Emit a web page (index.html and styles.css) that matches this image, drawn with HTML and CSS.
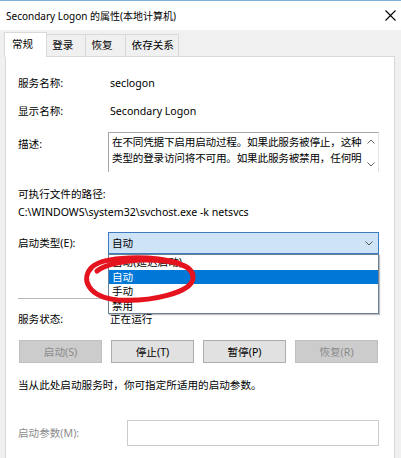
FILE: index.html
```html
<!DOCTYPE html>
<html lang="zh-CN">
<head>
<meta charset="utf-8">
<title>Secondary Logon 的属性(本地计算机)</title>
<link rel="stylesheet" href="styles.css">
</head>
<body>
<div class="win">
  <div class="titlebar">
    <span class="title">Secondary Logon 的属性(本地计算机)</span>
    <svg class="close" width="11" height="11" viewBox="0 0 11 11"><path d="M0.5 0.5 L10.5 10.5 M10.5 0.5 L0.5 10.5" stroke="#000" stroke-width="1.1" fill="none"/></svg>
  </div>
  <div class="tabs">
    <div class="tab active">常规</div>
    <div class="tab">登录</div>
    <div class="tab">恢复</div>
    <div class="tab last">依存关系</div>
  </div>
  <div class="panel">
    <div class="row r-name"><span class="lbl">服务名称:</span><span class="val">seclogon</span></div>
    <div class="row r-disp"><span class="lbl">显示名称:</span><span class="val">Secondary Logon</span></div>
    <div class="row r-desc">
      <span class="lbl desc-lbl">描述:</span>
      <div class="textbox">
        <div class="textbox-text">在不同凭据下启用启动过程。如果此服务被停止，这种<br>类型的登录访问将不可用。如果此服务被禁用，任何明</div>
        <div class="scroll">
          <svg width="8" height="5" viewBox="0 0 8 5"><path d="M0.5 4.5 L4 1 L7.5 4.5" stroke="#606060" stroke-width="1" fill="none"/></svg>
          <svg width="8" height="5" viewBox="0 0 8 5"><path d="M0.5 0.5 L4 4 L7.5 0.5" stroke="#606060" stroke-width="1" fill="none"/></svg>
        </div>
      </div>
    </div>
    <div class="exe-lbl">可执行文件的路径:</div>
    <div class="exe-path">C:\WINDOWS\system32\svchost.exe -k netsvcs</div>
    <div class="row r-type">
      <span class="lbl">启动类型(E):</span>
      <div class="combo">
        <div class="combo-box"><span>自动</span>
          <svg width="8" height="5" viewBox="0 0 8 5"><path d="M0.5 0.5 L4 4 L7.5 0.5" stroke="#555" stroke-width="1" fill="none"/></svg>
        </div>
        <ul class="dropdown">
          <li>自动(延迟启动)</li>
          <li class="sel">自动</li>
          <li>手动</li>
          <li>禁用</li>
        </ul>
      </div>
    </div>
    <div class="sep"></div>
    <div class="row r-status"><span class="lbl">服务状态:</span><span class="val">正在运行</span></div>
    <div class="btns">
      <button class="btn" disabled>启动(S)</button>
      <button class="btn">停止(T)</button>
      <button class="btn">暂停(P)</button>
      <button class="btn" disabled>恢复(R)</button>
    </div>
    <div class="hint">当从此处启动服务时，你可指定所适用的启动参数。</div>
    <div class="row r-param">
      <span class="lbl dis">启动参数(M):</span>
      <div class="param-input"></div>
    </div>
  </div>
  <svg class="mark" width="401" height="458" viewBox="0 0 401 458">
    <path d="M178 262 C150 254 104 255 92 266 C80 278 88 296 118 299 C150 301 192 292 193 277 C194 264 172 258 140 259 C122 260 104 264 97 270" stroke="#e5131d" stroke-width="5" fill="none" stroke-linecap="round"/>
  </svg>
</div>
</body>
</html>
```

FILE: styles.css
```css
* { box-sizing: border-box; }
body {
  margin: 0;
  font-family: "Segoe UI", "Noto Sans", "Noto Sans CJK SC", sans-serif;
  font-size: 10.6px;
  color: #000;
  background: #f0f0f0;
}
.win {
  width: 401px;
  height: 458px;
  overflow: hidden;
  background: #f0f0f0;
  position: relative;
  border-top: 1px solid #7eb0dc;
}
.titlebar {
  height: 29px;
  background: #fff;
  display: flex;
  align-items: center;
  justify-content: space-between;
  padding: 0 5px 0 6px;
}
.title { font-size: 10px; line-height: 16px; }
.tabs {
  display: flex;
  align-items: flex-end;
  height: 25px;
  margin-top: 2px;
  margin-bottom: -1px;
  padding-left: 4px;
  position: relative;
  z-index: 1;
}
.tab {
  height: 22px;
  margin-bottom: 1px;
  margin-left: -1px;
  border: 1px solid #d9d9d9;
  border-bottom: none;
  padding: 0 12px 0 5px;
  line-height: 20px;
  background: #f0f0f0;
}
.tab.active {
  height: 25px;
  margin-bottom: 0;
  margin-left: 0;
  background: #fff;
  padding: 0 13px 0 7px;
  line-height: 22px;
}
.tab.last { padding-right: 4px; padding-left: 6px; }
.panel {
  margin-left: 5px;
  width: 390px;
  height: 410px;
  background: #fff;
  border: 1px solid #d9d9d9;
  padding: 0 15px 0 12px;
}
.row {
  display: grid;
  grid-template-columns: 90px 1fr;
  align-items: center;
  line-height: 16px;
}
.val { padding-left: 2px; }
.r-name { margin-top: 18px; }
.r-disp { margin-top: 12px; }
.r-desc { margin-top: 13px; align-items: start; }
.desc-lbl { padding-top: 4px; }
.textbox {
  height: 40px;
  border-top: 1px solid #a8a8a8;
  border-left: 1px solid #a8a8a8;
  border-right: 1px solid #e3e3e3;
  display: flex;
  overflow: hidden;
}
.textbox-text {
  flex: 1;
  padding: 1px 0 0 3px;
  line-height: 16px;
  white-space: nowrap;
  overflow: hidden;
  letter-spacing: -0.2px;
}
.scroll {
  width: 14px;
  flex: none;
  display: flex;
  flex-direction: column;
  justify-content: space-between;
  align-items: center;
  padding: 6px 0 5px;
}
.exe-lbl { margin-top: 14px; line-height: 16px; }
.exe-path { margin-top: 2px; line-height: 16px; }
.r-type { margin-top: 12px; }
.combo { position: relative; }
.combo-box {
  height: 22px;
  border: 1px solid #3d7bbf;
  background: #cfe3f6;
  display: flex;
  align-items: center;
  justify-content: space-between;
  padding: 0 5px 0 3px;
}
.dropdown {
  position: absolute;
  top: 22px;
  left: 0;
  right: 0;
  margin: 0;
  padding: 0;
  list-style: none;
  background: #fff;
  border: 1px solid #6b7f95;
  box-shadow: 1px 1px 1px rgba(0,0,0,0.25);
  z-index: 2;
}
.dropdown li {
  height: 14.5px;
  line-height: 14.5px;
  padding-left: 3px;
}
.dropdown li.sel { background: #0078d7; color: #fff; }
.sep { margin-top: 44px; height: 1px; background: #b9b9b9; }
.r-status { margin-top: 12px; }
.btns {
  margin-top: 13px;
  margin-left: 1px;
  margin-right: 1px;
  display: grid;
  grid-template-columns: repeat(4, 1fr);
  column-gap: 9px;
}
.btn {
  height: 23px;
  font: inherit;
  color: #000;
  background: #e1e1e1;
  border: 1px solid #adadad;
  padding: 0;
}
.btn:disabled { background: #cccccc; border-color: #bfbfbf; color: #8a8a8a; }
.hint { margin-top: 14px; line-height: 16px; }
.r-param { margin-top: 27px; grid-template-columns: 109px 1fr; }
.dis { color: #8c8c8c; }
.param-input { height: 26px; border: 1px solid #cccccc; background: #fff; }
.mark { position: absolute; left: 0; top: 0; pointer-events: none; z-index: 5; }
```
